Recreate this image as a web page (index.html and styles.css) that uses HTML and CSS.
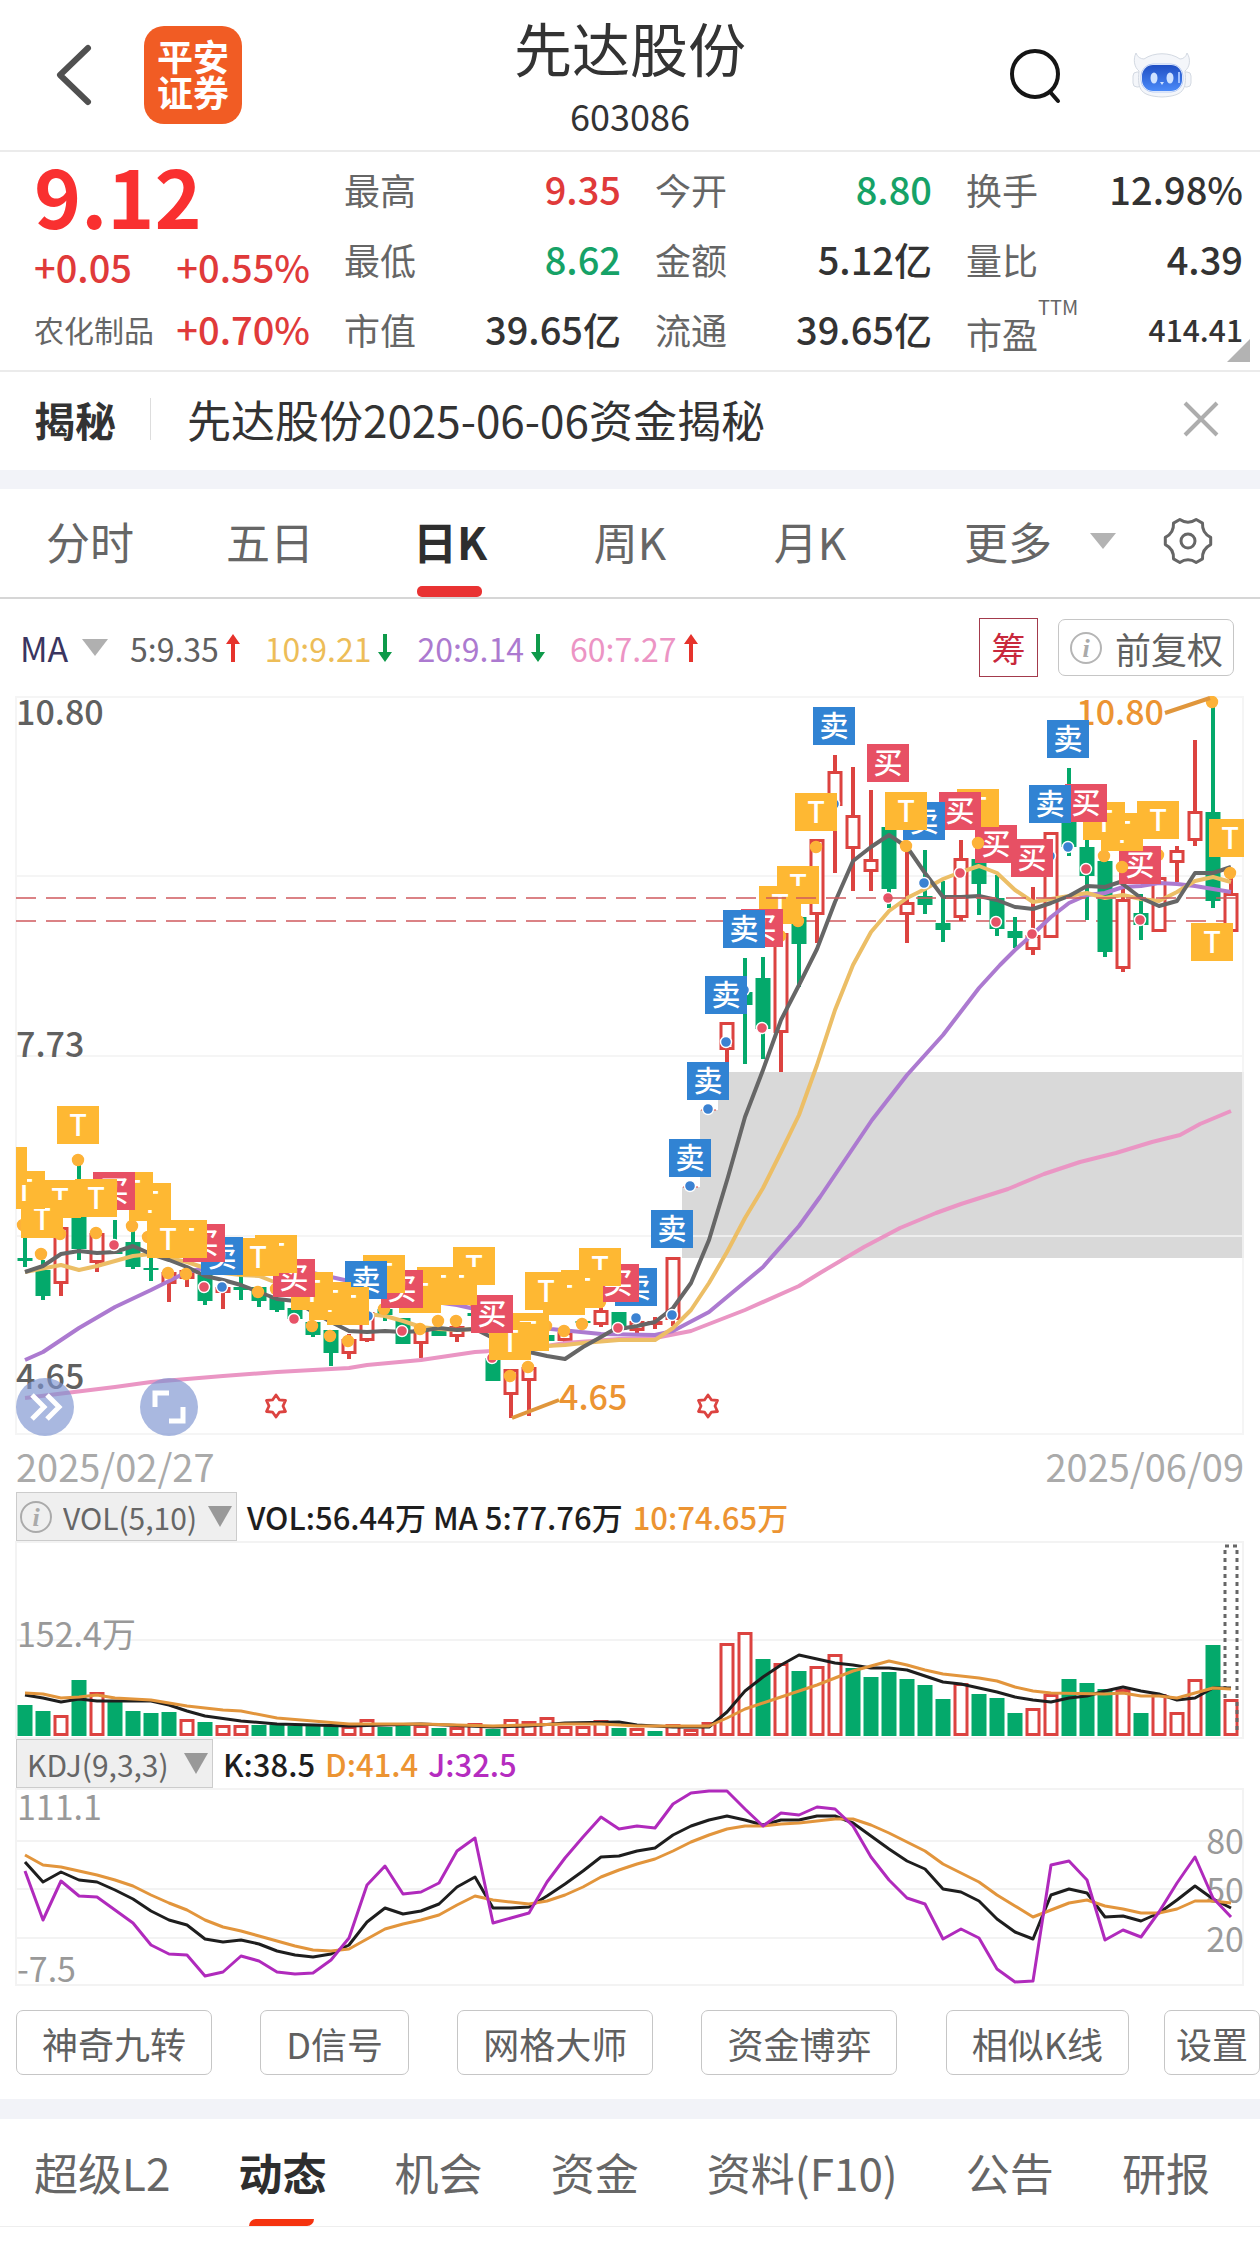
FILE: index.html
```html
<!DOCTYPE html>
<html lang="zh-CN">
<head>
<meta charset="utf-8">
<meta name="viewport" content="width=device-width, initial-scale=1">
<title>先达股份 603086</title>
<link rel="stylesheet" href="styles.css">
</head>
<body>
<header class="topbar">
  <div class="topbar-side">
    <button class="icon-btn" aria-label="返回"><svg width="40" height="64" viewBox="0 0 40 64"><path d="M34 5 6 32 34 59" fill="none" stroke="#505050" stroke-width="6" stroke-linecap="round" stroke-linejoin="round"/></svg></button>
    <a class="logo" href="#"><span>平安</span><span>证券</span></a>
  </div>
  <div class="stock">
    <h1 class="stock-name">先达股份</h1>
    <div class="stock-code">603086</div>
  </div>
  <div class="topbar-side topbar-end">
    <button class="icon-btn" aria-label="搜索"><svg width="60" height="60" viewBox="0 0 60 60"><g fill="none" stroke="#151515" stroke-width="4" stroke-linecap="round"><circle cx="31" cy="29" r="23"/><path d="M47 48 54 56"/></g></svg></button>
    <button class="icon-btn" aria-label="智能助手"><svg width="60" height="50" viewBox="0 0 60 50">
      <defs><linearGradient id="face" x1="0" y1="0" x2="0" y2="1"><stop offset="0" stop-color="#1f4fc4"/><stop offset="1" stop-color="#4b8af8"/></linearGradient></defs>
      <g fill="#f4f6fa" stroke="#d3d9e2" stroke-width="1">
        <rect x="1" y="22" width="9" height="15" rx="4"/><rect x="50" y="22" width="9" height="15" rx="4"/>
        <path d="M4 3C1 9 2 17 7 21 5 40 9 46 30 47 51 46 55 40 53 21 58 17 59 9 55 3 54 7 51 9 48 9 38 2 22 2 12 9 9 9 5 7 4 3Z"/>
      </g>
      <rect x="9" y="14" width="42" height="28" rx="12" fill="#fff" stroke="#b9cdf5"/>
      <rect x="10" y="15" width="40" height="26" rx="11" fill="url(#face)"/>
      <g fill="#cfe2ff"><ellipse cx="22" cy="28" rx="3.5" ry="5.5"/><ellipse cx="38" cy="28" rx="3.5" ry="5.5"/><path d="M28 32h4l-2 3z"/></g>
      <path d="M47 22v11" stroke="#9fc0ff" stroke-width="2"/>
    </svg></button>
  </div>
</header>

<section class="quote">
  <div class="price">
    <div class="price-now">9.12</div>
    <div class="price-row up"><span>+0.05</span><span>+0.55%</span></div>
    <div class="price-row up"><span class="sector">农化制品</span><span>+0.70%</span></div>
  </div>
  <dl class="stats">
    <div><dt>最高</dt><dd class="up">9.35</dd></div>
    <div><dt>今开</dt><dd class="down">8.80</dd></div>
    <div><dt>换手</dt><dd>12.98%</dd></div>
    <div><dt>最低</dt><dd class="down">8.62</dd></div>
    <div><dt>金额</dt><dd>5.12亿</dd></div>
    <div><dt>量比</dt><dd>4.39</dd></div>
    <div><dt>市值</dt><dd>39.65亿</dd></div>
    <div><dt>流通</dt><dd>39.65亿</dd></div>
    <div><dt>市盈<sup>TTM</sup></dt><dd class="small">414.41</dd></div>
  </dl>
  <svg class="corner" width="23" height="23" viewBox="0 0 23 23"><path d="M23 0V23H0Z" fill="#b3b3b3"/></svg>
</section>

<section class="notice">
  <strong class="notice-tag">揭秘</strong>
  <a class="notice-text" href="#">先达股份2025-06-06资金揭秘</a>
  <button class="icon-btn" aria-label="关闭"><svg width="38" height="38" viewBox="0 0 38 38"><path d="M3 3 35 35M35 3 3 35" stroke="#adadad" stroke-width="4"/></svg></button>
</section>

<nav class="periods">
  <div class="period-list">
    <button>分时</button><button>五日</button><button class="active">日K</button><button>周K</button><button>月K</button>
  </div>
  <div class="period-more">
    <button>更多<svg width="26" height="16" viewBox="0 0 26 16"><path d="M0 0H26L13 16Z" fill="#b3b3b3"/></svg></button>
    <button aria-label="设置"><svg width="50" height="50" viewBox="-25 -25 50 50"><g fill="none" stroke="#666" stroke-width="3" stroke-linejoin="round"><path d="M22.7 3.6Q13.9 8 14.5 17.9L8.2 21.5Q0 16-8.2 21.5L-14.5 17.9Q-13.9 8-22.7 3.6V-3.6Q-13.9-8-14.5-17.9L-8.2-21.5Q0-16 8.2-21.5L14.5-17.9Q13.9-8 22.7-3.6Z"/><circle r="7"/></g></svg></button>
  </div>
</nav>

<main>
  <div class="ma-bar">
    <label class="ma-pick"><select aria-label="均线指标"><option>MA</option></select><svg width="26" height="17" viewBox="0 0 26 17"><path d="M0 0H26L13 17Z" fill="#b0b0b0"/></svg></label>
    <div class="ma-list">
      <span class="ma5">5:9.35<svg class="arrow" width="16" height="28" viewBox="0 0 16 28"><path d="M8 0 15 10H10V28H6V10H1Z" fill="#e6332c"/></svg></span>
      <span class="ma10">10:9.21<svg class="arrow" width="16" height="28" viewBox="0 0 16 28"><path d="M8 28 15 18H10V0H6V18H1Z" fill="#0e9a4a"/></svg></span>
      <span class="ma20">20:9.14<svg class="arrow" width="16" height="28" viewBox="0 0 16 28"><path d="M8 28 15 18H10V0H6V18H1Z" fill="#0e9a4a"/></svg></span>
      <span class="ma60">60:7.27<svg class="arrow" width="16" height="28" viewBox="0 0 16 28"><path d="M8 0 15 10H10V28H6V10H1Z" fill="#e6332c"/></svg></span>
    </div>
    <button class="chip-btn">筹</button>
    <button class="adjust-btn"><svg width="34" height="34" viewBox="0 0 34 34"><circle cx="17" cy="17" r="15" fill="none" stroke="#b5b5b5" stroke-width="2"/><text class="info-i" x="17" y="26" text-anchor="middle">i</text></svg>前复权</button>
  </div>

  <div class="kline">
    <svg class="plot" id="kline" viewBox="0 696 1260 740" role="img" aria-label="日K线图"></svg>
    <div class="kline-tools">
      <button aria-label="快进"><svg width="58" height="58" viewBox="0 0 58 58"><path d="M16 17 28 29 16 41M31 17 43 29 31 41" fill="none" stroke="#fff" stroke-width="5"/></svg></button>
      <button aria-label="全屏"><svg width="58" height="58" viewBox="0 0 58 58"><path d="M15 29V15H29M43 29V43H29" fill="none" stroke="#fff" stroke-width="5"/></svg></button>
    </div>
  </div>
  <div class="dates"><time>2025/02/27</time><time>2025/06/09</time></div>

  <div class="ind-bar">
    <label class="ind-pick"><svg width="34" height="34" viewBox="0 0 34 34"><circle cx="17" cy="17" r="15" fill="none" stroke="#aaa" stroke-width="2"/><text class="info-i" x="17" y="26" text-anchor="middle">i</text></svg><select aria-label="副图指标一"><option>VOL(5,10)</option></select><svg width="24" height="21" viewBox="0 0 24 21"><path d="M0 0H24L12 21Z" fill="#999"/></svg></label>
    <span>VOL:56.44万 MA 5:77.76万</span><span class="c-orange">10:74.65万</span>
  </div>
  <svg class="plot" id="volume" viewBox="0 1541 1260 198" role="img" aria-label="成交量"></svg>

  <div class="ind-bar">
    <label class="ind-pick ind-pick-plain"><select aria-label="副图指标二"><option>KDJ(9,3,3)</option></select><svg width="24" height="21" viewBox="0 0 24 21"><path d="M0 0H24L12 21Z" fill="#999"/></svg></label>
    <span>K:38.5</span><span class="c-orange">D:41.4</span><span class="c-purple">J:32.5</span>
  </div>
  <svg class="plot" id="kdj" viewBox="0 1788 1260 198" role="img" aria-label="KDJ指标"></svg>

  <div class="signals">
    <div class="signal-list">
      <button>神奇九转</button><button>D信号</button><button>网格大师</button><button>资金博弈</button><button>相似K线</button>
    </div>
    <button class="signal-set">设置</button>
  </div>
</main>

<nav class="sections">
  <a href="#">超级L2</a><a href="#" class="active">动态</a><a href="#">机会</a><a href="#">资金</a><a href="#">资料(F10)</a><a href="#">公告</a><a href="#">研报</a>
</nav>
<script src="chart.js"></script>
</body>
</html>
```
FILE: styles.css
```css
* { box-sizing: border-box; }
body {
  margin: 0;
  background: #fff;
  color: #333;
  font-family: "Noto Sans CJK SC", "Noto Sans", sans-serif;
  font-size: 36px;
  line-height: 1;
}
button, select {
  margin: 0;
  padding: 0;
  border: 0;
  background: none;
  color: inherit;
  font: inherit;
  appearance: none;
}
a { color: inherit; text-decoration: none; }
svg { display: block; flex: none; }
.up { color: #e03a3a; }
.down { color: #16a267; }

/* top bar */
.topbar {
  display: grid;
  grid-template-columns: 1fr auto 1fr;
  align-items: center;
  height: 152px;
  padding: 0 54px;
  border-bottom: 2px solid #ebebeb;
}
.topbar-side { display: flex; align-items: center; gap: 50px; }
.topbar-end { justify-content: flex-end; gap: 68px; padding-right: 14px; }
.logo {
  display: flex;
  flex-direction: column;
  align-items: center;
  justify-content: center;
  width: 98px;
  height: 98px;
  padding-bottom: 4px;
  border-radius: 20px;
  background: #f15c24;
  color: #fff;
  font-size: 36px;
  font-weight: 700;
  line-height: 36px;
}
.stock { padding-top: 10px; text-align: center; }
.stock-name { margin: 0; font-size: 58px; font-weight: 400; line-height: 70px; }
.stock-code { line-height: 66px; }

/* quote */
.quote {
  position: relative;
  display: flex;
  gap: 34px;
  height: 220px;
  padding: 2px 17px 0 34px;
  border-bottom: 2px solid #ebebeb;
}
.price { flex: 0 0 276px; }
.price-now { color: #f93030; font-size: 80px; font-weight: 700; line-height: 80px; }
.price-row {
  display: flex;
  align-items: center;
  justify-content: space-between;
  height: 62px;
  padding-top: 4px;
  font-size: 38px;
  font-weight: 500;
}
.sector { color: #666; font-size: 30px; font-weight: 400; }
.stats {
  flex: 1;
  display: grid;
  grid-template-columns: repeat(3, 1fr);
  grid-auto-rows: 70px;
  column-gap: 34px;
  margin: 0;
}
.stats div { display: flex; align-items: center; justify-content: space-between; }
.stats dt { color: #666; }
.stats dd { margin: 0; font-size: 38px; font-weight: 500; }
.stats dd.small { font-size: 30px; }
.stats sup { font-size: 20px; line-height: 0; vertical-align: 34px; }
.corner { position: absolute; right: 10px; bottom: 8px; }

/* notice */
.notice {
  display: flex;
  align-items: center;
  height: 98px;
  padding: 0 40px 4px 34px;
}
.notice-tag { padding-right: 34px; border-right: 1px solid #ddd; font-size: 41px; line-height: 42px; }
.notice-text { flex: 1; padding-left: 36px; font-size: 44px; }

/* period tabs */
.periods {
  display: flex;
  height: 129px;
  border-top: 19px solid #f2f3f8;
  border-bottom: 2px solid #d6d6d6;
  color: #666;
  font-size: 44px;
}
.period-list { flex: 1; display: grid; grid-template-columns: repeat(5, 1fr); }
.periods button { position: relative; padding-bottom: 4px; }
.active { color: #2e2e2e; font-weight: 700; }
.period-list .active::after {
  content: "";
  position: absolute;
  left: 50%;
  bottom: 0;
  width: 65px;
  height: 11px;
  margin-left: -33px;
  border-radius: 5px;
  background: #e93232;
}
.period-more {
  display: flex;
  justify-content: space-between;
  flex: 0 0 360px;
  padding: 0 47px 0 64px;
}
.period-more button { display: flex; align-items: center; gap: 38px; }

/* moving averages */
.ma-bar {
  display: flex;
  align-items: center;
  height: 97px;
  padding: 0 26px 0 20px;
  font-size: 32px;
}
.ma-pick { display: flex; align-items: center; gap: 13px; margin-right: 22px; color: #3a3560; font-size: 34px; }
.ma-list { flex: 1; display: flex; gap: 24px; }
.ma-list span { display: flex; align-items: center; gap: 6px; }
.ma5 { color: #606060; }
.ma10 { color: #edbd58; }
.ma20 { color: #ac7ad0; }
.ma60 { color: #ec94c4; }
.chip-btn {
  width: 59px;
  height: 59px;
  margin-right: 20px;
  border: 1px solid #a33a4c;
  color: #c8283c;
  font-size: 34px;
}
.adjust-btn {
  display: flex;
  align-items: center;
  gap: 12px;
  height: 57px;
  padding: 0 10px;
  border: 1px solid #c6c6c6;
  border-radius: 7px;
  color: #606060;
  font-size: 36px;
}
.info-i { fill: #aaa; font: italic 700 26px "Liberation Serif", serif; }

/* plots */
.plot { width: 100%; height: auto; font-size: 34px; overflow: hidden; }
.kline { position: relative; }
.kline-tools { position: absolute; left: 16px; bottom: 0; display: flex; gap: 66px; }
.kline-tools button { border-radius: 50%; background: rgba(124, 147, 208, 0.66); }
.plot .grid { fill: none; stroke: #f3f3f3; stroke-width: 2; }
.plot .zone { fill: #d9d9d9; }
.plot .line { fill: none; stroke-width: 4; stroke-linejoin: round; }
.plot .axis { fill: #606060; font-weight: 500; }
.plot .axis-light { fill: #999; }
.plot .mark { fill: #ec9432; font-weight: 500; }
.plot .badge-text { fill: #fff; font-size: 29px; font-weight: 500; text-anchor: middle; }
.dates {
  display: flex;
  align-items: center;
  justify-content: space-between;
  height: 56px;
  padding: 4px 16px 0;
  color: #aaa;
  font-size: 38px;
}

/* indicator headings */
.ind-bar {
  display: flex;
  align-items: center;
  gap: 10px;
  height: 49px;
  padding: 0 16px;
  color: #1e1e1e;
  font-size: 31px;
  font-weight: 500;
}
.ind-pick {
  display: flex;
  align-items: center;
  gap: 10px;
  height: 49px;
  padding: 0 4px 0 2px;
  border: 1px solid #ccc;
  background: #efefef;
  color: #666;
  font-size: 30px;
  font-weight: 400;
}
.ind-pick-plain { gap: 15px; padding-left: 10px; }
.ind-pick select { height: 46px; line-height: 46px; }
.c-orange { color: #ec9432; }
.c-purple { color: #b52cc0; }

/* signals */
.signals { display: flex; gap: 35px; padding: 24px 0 24px 16px; color: #606060; }
.signal-list { flex: 1; display: flex; justify-content: space-between; }
.signals button { height: 65px; padding: 0 25px; border: 1px solid #c6c6c6; border-radius: 7px; }
.signals .signal-set { padding: 0 11px; }

/* bottom tabs */
.sections {
  display: flex;
  justify-content: space-between;
  height: 128px;
  padding: 0 50px 0 34px;
  border-top: 20px solid #f2f3f8;
  border-bottom: 1px solid #eee;
  color: #666;
  font-size: 44px;
  line-height: 107px;
}
.sections a { position: relative; }
.sections .active::after {
  content: "";
  position: absolute;
  left: 50%;
  bottom: 0;
  width: 65px;
  height: 7px;
  margin-left: -33px;
  border-radius: 7px 0 7px 0;
  background: #f5330f;
}
```
FILE: chart.js
```js
const NS = 'http://www.w3.org/2000/svg';
const RED = '#dc4340', GREEN = '#04a96b';
const xAt = i => 25 + 18 * i;

function add(svg, tag, attrs, text) {
  const el = document.createElementNS(NS, tag);
  for (const k in attrs) el.setAttribute(k, attrs[k]);
  if (text) el.textContent = text;
  svg.appendChild(el);
  return el;
}
const line = (svg, d, color) => add(svg, 'path', { class: 'line', d, stroke: color });
// "x,y x,y ..." pairs
const pairs = (svg, s, color) => line(svg, 'M' + s.trim().split(/\s+/).join('L'), color);
// "day:y day:y ..." pairs
const byDay = (svg, s, color) => pairs(svg, s.trim().split(/\s+/).map(p => {
  const [i, y] = p.split(':'); return xAt(+i) + ',' + y;
}).join(' '), color);
const daily = (svg, ys, color) => line(svg, 'M' + ys.map((y, i) => xAt(i) + ',' + y).join('L'), color);

/* ---------- candles ---------- */
const k = document.getElementById('kline');
add(k, 'path', { class: 'zone', d: 'M682 1258V1187H700V1110H718V1072H1244V1258Z' });
add(k, 'path', { class: 'grid', d: 'M16 697H1243V1434H16ZM16 876H1243M16 1056H1243M16 1236H1243', opacity: .8 });
const guide = y => add(k, 'path', { d: `M16 ${y}H1243`, stroke: '#cf5a5e', 'stroke-width': 1.5, 'stroke-dasharray': '20 10' });
guide(921);

// [up?, high, body top, body bottom, low]
const candles = [
[0,1237,1258,1261,1267],[0,1260,1270,1296,1300],[1,1227,1227,1284,1296],[0,1160,1210,1249,1260],[1,1233,1233,1263,1272],
[0,1220,1252,1254,1254],[0,1227,1242,1267,1269],[0,1257,1268,1270,1281],[1,1272,1272,1284,1302],[1,1270,1270,1279,1287],
[0,1275,1275,1301,1305],[1,1287,1287,1293,1309],[0,1275,1287,1290,1300],[0,1287,1287,1301,1307],[0,1298,1298,1310,1312],
[0,1308,1308,1319,1319],[0,1322,1322,1335,1337],[0,1330,1330,1353,1366],[1,1334,1339,1354,1359],[1,1312,1312,1341,1342],
[0,1309,1309,1315,1321],[0,1318,1318,1344,1344],[1,1329,1329,1344,1358],[0,1329,1329,1336,1336],[1,1326,1326,1337,1342],
[0,1313,1313,1316,1316],[0,1355,1358,1381,1381],[1,1369,1369,1395,1418],[1,1367,1367,1381,1416],[0,1335,1335,1341,1341],
[1,1332,1332,1341,1346],[0,1321,1321,1323,1323],[1,1307,1310,1325,1327],[0,1312,1312,1330,1330],[1,1321,1321,1331,1333],
[1,1317,1321,1325,1329],[1,1257,1257,1320,1326],null,null,[1,1022,1022,1050,1062],
[0,958,992,1005,1064],[0,957,978,1029,1059],[1,933,933,1033,1072],[0,917,917,944,987],[1,839,839,915,943],
[1,755,771,806,873],[1,767,815,849,891],[1,790,859,872,891],[0,827,827,889,908],[1,847,902,915,943],
[0,850,896,905,914],[0,881,923,930,942],[1,840,858,918,921],[0,859,859,884,915],[0,875,898,929,936],
[0,917,931,938,948],[1,887,935,950,955],[1,832,832,938,938],[0,768,820,847,856],[0,840,847,876,920],
[0,861,861,952,957],[1,884,899,969,972],[0,894,913,925,940],[1,877,877,932,932],[1,846,850,863,882],
[1,740,811,841,846],[0,700,812,901,908],[1,877,893,932,932]];
candles.forEach((c, i) => {
  if (!c) return;
  const [up, hi, top, bot, lo] = c, x = xAt(i), color = up ? RED : GREEN;
  add(k, 'path', { d: `M${x} ${hi}V${top}M${x} ${bot}V${lo}`, stroke: color, 'stroke-width': 4 });
  if (up) add(k, 'rect', { x: x - 6, y: top + 1.5, width: 12, height: Math.max(bot - top - 3, 1), fill: '#fff', stroke: color, 'stroke-width': 3 });
  else add(k, 'rect', { x: x - 7.5, y: top, width: 15, height: bot - top, fill: color });
});
add(k, 'path', { d: 'M683 1187H698M701 1110H716', stroke: RED, 'stroke-width': 1 });

pairs(k, `25,1398 115,1387 151,1382 223,1376 277,1372 349,1368 367,1365 421,1360 475,1352 529,1349 565,1343 619,1339 655,1338 691,1331
 745,1310 799,1286 820,1273 864,1247 900,1228 936,1213 961,1204 1008,1189 1044,1174 1080,1162 1116,1153 1152,1142 1180,1135 1200,1124 1231,1111`, '#ea96c4');
pairs(k, `25,1360 43,1352 79,1328 115,1307 151,1290 187,1272 205,1268 241,1266 277,1268 313,1273 349,1281 385,1292 421,1300 457,1305 493,1313
 529,1323 551,1329 601,1334 655,1335 673,1331 709,1312 763,1267 799,1226 820,1197 872,1120 907,1075 943,1035 979,988 1000,965 1015,950 1033,934
 1051,917 1069,903 1087,895 1105,893 1123,887 1141,886 1159,883 1177,884 1195,886 1213,889 1231,892`, '#ac7ad0');
pairs(k, `25,1272 61,1265 79,1270 97,1266 115,1261 133,1256 151,1254 169,1258 187,1262 205,1268 223,1273 241,1275 259,1276 277,1283 295,1293
 313,1300 331,1306 349,1312 367,1314 385,1316 403,1321 421,1327 439,1329 457,1330 475,1329 493,1332 511,1340 529,1345 547,1346 565,1345 583,1343
 619,1340 655,1340 673,1328 691,1310 709,1283 727,1252 745,1218 763,1188 781,1152 799,1115 817,1065 835,1010 853,965 871,932 889,911 907,898
 925,889 943,879 961,872 979,866 997,873 1015,890 1033,902 1051,899 1069,896 1087,893 1105,898 1123,895 1141,899 1159,901 1177,892 1195,881
 1213,877 1231,882`, '#ecbe66');
pairs(k, `25,1272 43,1266 61,1254 79,1251 97,1253 115,1252 133,1246 151,1254 169,1260 187,1267 205,1276 223,1280 241,1285 259,1292 277,1299
 295,1301 313,1312 331,1322 349,1331 367,1332 385,1331 403,1332 421,1331 439,1328 457,1330 475,1329 493,1338 511,1348 529,1352 547,1356 565,1359
 583,1347 601,1337 613,1330 637,1326 655,1322 673,1308 691,1283 709,1240 728,1177 745,1117 763,1070 781,1020 799,985 817,949 835,902 853,861
 871,847 889,835 907,847 925,873 943,897 961,897 979,896 997,900 1015,907 1033,909 1051,903 1069,896 1087,886 1105,887 1120,882 1141,898
 1159,906 1177,901 1195,873 1213,873 1231,867`, '#666');

const dots = {
  '#fdb238': '23,1225 41,1254 60,1234 78,1160 96,1233 132,1226 148,1237 168,1273 186,1274 258,1292 276,1289 312,1326 330,1336 348,1341 384,1309 420,1329 438,1321 456,1321 474,1301 510,1376 528,1367 546,1326 564,1331 582,1324 600,1302 780,936 798,921 816,847 906,846 1104,856 1158,855 1212,702 1230,873',
  '#e75267': '114,1245 204,1287 294,1319 402,1331 492,1358 618,1328 762,1028 888,898 960,873 996,922 1032,934 1086,869 1140,920',
  '#3b82d2': '222,1287 368,1316 636,1318 672,1315 690,1186 708,1109 726,1042 744,990 834,804 924,883 1050,856 1068,847'
};
const dot = (p, fill) => {
  const [cx, cy] = p.split(',');
  add(k, 'circle', { cx, cy, r: 5.5, fill, stroke: fill === '#fdb238' ? fill : '#fff', 'stroke-width': 1.4 });
};
for (const fill in dots) dots[fill].split(' ').forEach(p => dot(p, fill));
add(k, 'text', { class: 'mark', x: 1164, y: 725, 'text-anchor': 'end' }, '10.80');

// trade badges: kind, left, top; the ones further left lie on top
const badges = [
['T',-15,1147],['T',3,1171],['T',21,1200],['T',39,1180],['T',57,1106],['T',75,1179],['买',93,1172],['T',111,1172],['T',129,1183],
['T',147,1220],['T',165,1220],['买',183,1224],['卖',201,1237],['T',237,1238],['T',255,1235],['买',273,1259],['T',291,1272],['T',309,1282],
['T',327,1287],['卖',345,1261],['T',363,1255],['买',381,1270],['T',399,1275],['T',417,1267],['T',435,1267],['T',453,1247],['买',471,1295],
['T',489,1322],['T',507,1313],['T',525,1272],['T',543,1277],['T',561,1270],['T',579,1248],['买',597,1264],['卖',615,1268],['卖',651,1210],
['卖',669,1139],['卖',687,1062],['卖',705,976],['卖',723,910],['买',741,909],['T',759,886],['T',777,866],['T',795,793],['卖',813,707],
['买',867,744],['T',885,792],['卖',903,802],['买',939,792],['T',957,789],['买',975,825],['买',1011,839],['卖',1029,785],['卖',1047,720],
['买',1065,784],['T',1083,802],['T',1101,813],['买',1119,846],['T',1137,801],['T',1191,923],['T',1209,819]];
const clip = add(k, 'clipPath', { id: 'frame' });
add(clip, 'rect', { x: 16, y: 696, width: 1228, height: 740 });
const layer = add(k, 'g', { 'clip-path': 'url(#frame)' });
const badgeFill = { T: '#feb833', 买: '#e75064', 卖: '#3183d3' };
badges.reverse().forEach(([kind, x, y]) => {
  add(layer, 'rect', { x, y, width: 42, height: 38, fill: badgeFill[kind] });
  add(layer, 'text', { class: 'badge-text', x: x + 21, y: y + 30 }, kind);
});
['978,843', '1122,867'].forEach(p => dot(p, '#fdb238'));
guide(898);

line(k, 'M1165 713 1210 698', '#e0963c');
line(k, 'M512 1418 559 1400', '#e0963c');
add(k, 'text', { class: 'mark', x: 559, y: 1410 }, '4.65');
add(k, 'text', { class: 'axis', x: 16, y: 725 }, '10.80');
add(k, 'text', { class: 'axis', x: 16, y: 1057 }, '7.73');
add(k, 'text', { class: 'axis', x: 16, y: 1389 }, '4.65');
[276, 708].forEach(cx => {
  let d = '';
  for (let n = 0; n < 12; n++) {
    const r = n % 2 ? 7 : 11, a = Math.PI * n / 6;
    d += (n ? 'L' : 'M') + (cx + r * Math.sin(a)) + ' ' + (1406 - r * Math.cos(a));
  }
  add(k, 'path', { d: d + 'Z', fill: 'none', stroke: '#dc4340', 'stroke-width': 2.8, 'stroke-linejoin': 'round' });
});

/* ---------- volume ---------- */
const v = document.getElementById('volume');
add(v, 'path', { class: 'grid', d: 'M16 1542H1243V1738H16ZM16 1640H1243' });
const heights = [31,25,21,56,44,34,25,23,24,17,14,11,11,11,11,10,10,10,10,17,9,10,11,8,9,13,7,17,15,19,10,10,16,8,8,5,12,7,14,93,104,77,73,65,70,82,68,59,64,57,51,37,53,42,38,23,28,42,57,53,47,47,23,42,24,57,91,37];
const rise = 'ggrgrggggrgrrgggggrrggrgrrgrrrrrrgrgrrrrrgrgrrggggggrgggrrgggrgrrrgr';
heights.forEach((h, i) => {
  const x = xAt(i);
  if (rise[i] === 'r') add(v, 'rect', { x: x - 6, y: 1737.5 - h, width: 12, height: Math.max(h - 3, 2), fill: '#fff', stroke: RED, 'stroke-width': 3 });
  else add(v, 'rect', { x: x - 7.5, y: 1736 - h, width: 15, height: h, fill: GREEN });
});
add(v, 'path', { d: 'M1225 1698V1546H1237V1734', fill: 'none', stroke: '#666', 'stroke-width': 3, 'stroke-dasharray': '4 4' });
byDay(v, `0:1695 1:1698 2:1702 3:1699 4:1701 7:1701 8:1705 9:1711 10:1716 12:1721 14:1724 18:1726 22:1724 26:1727 28:1726 30:1723 33:1722 34:1725
 36:1727 38:1727 39:1712 40:1691 41:1677 42:1665 43:1655 44:1659 45:1663 46:1665 47:1668 48:1668 49:1670 50:1676 51:1682 52:1684 54:1692 55:1697
 56:1700 57:1702 58:1698 59:1696 60:1691 61:1687 62:1691 63:1694 64:1700 65:1698 66:1688 67:1688`, '#1e1e1e').style.strokeWidth = 3;
byDay(v, `0:1693 1:1694 2:1698 3:1697 4:1695 5:1698 7:1700 9:1706 11:1710 12:1711 14:1718 16:1721 18:1724 22:1724 26:1726 30:1724 32:1724 34:1726
 38:1726 39:1718 40:1709 42:1697 44:1685 46:1671 47:1666 48:1661 49:1665 50:1670 51:1674 53:1678 54:1681 55:1687 56:1691 57:1693 60:1694 61:1693
 62:1696 63:1696 64:1698 65:1693 66:1688 67:1689`, '#e2953c').style.strokeWidth = 3;
add(v, 'text', { class: 'axis-light', x: 17, y: 1647 }, '152.4万');

/* ---------- KDJ ---------- */
const j = document.getElementById('kdj');
add(j, 'path', { class: 'grid', d: 'M16 1789H1243V1985H16ZM16 1841H1243M16 1889H1243M16 1938H1243' });
[['80', 1854], ['50', 1903], ['20', 1952]].forEach(([t, y]) => add(j, 'text', { class: 'axis-light', x: 1244, y, 'text-anchor': 'end' }, t));
daily(j, [1862,1882,1872,1880,1882,1890,1899,1911,1920,1925,1939,1942,1940,1944,1951,1955,1957,1954,1945,1922,1908,1914,1911,1904,1887,1877,1908,1908,1907,1896,1884,1871,1857,1856,1851,1848,1835,1826,1820,1816,1820,1825,1820,1820,1816,1816,1823,1836,1849,1861,1869,1889,1892,1901,1919,1932,1939,1895,1889,1893,1917,1916,1921,1913,1900,1886,1899,1908], '#1e1e1e').style.strokeWidth = 3;
daily(j, [1855,1865,1867,1871,1875,1880,1886,1895,1903,1910,1920,1927,1931,1936,1941,1946,1950,1951,1949,1939,1929,1924,1920,1915,1905,1896,1900,1902,1904,1901,1895,1887,1877,1870,1864,1859,1851,1842,1835,1829,1826,1826,1824,1823,1821,1819,1819,1825,1833,1842,1851,1864,1873,1882,1895,1906,1917,1910,1903,1900,1906,1909,1913,1913,1909,1901,1901,1903], '#e2953c').style.strokeWidth = 3;
daily(j, [1871,1920,1881,1896,1897,1910,1923,1945,1954,1955,1976,1972,1956,1961,1972,1974,1973,1960,1938,1885,1866,1894,1892,1883,1851,1838,1923,1918,1913,1882,1858,1837,1817,1829,1826,1828,1804,1793,1791,1791,1809,1826,1813,1815,1807,1809,1826,1857,1880,1898,1904,1939,1929,1938,1969,1982,1981,1865,1861,1880,1940,1930,1937,1912,1883,1857,1898,1917], '#b02abc').style.strokeWidth = 3;
add(j, 'text', { class: 'axis-light', x: 17, y: 1820 }, '111.1');
add(j, 'text', { class: 'axis-light', x: 17, y: 1982 }, '-7.5');
```
